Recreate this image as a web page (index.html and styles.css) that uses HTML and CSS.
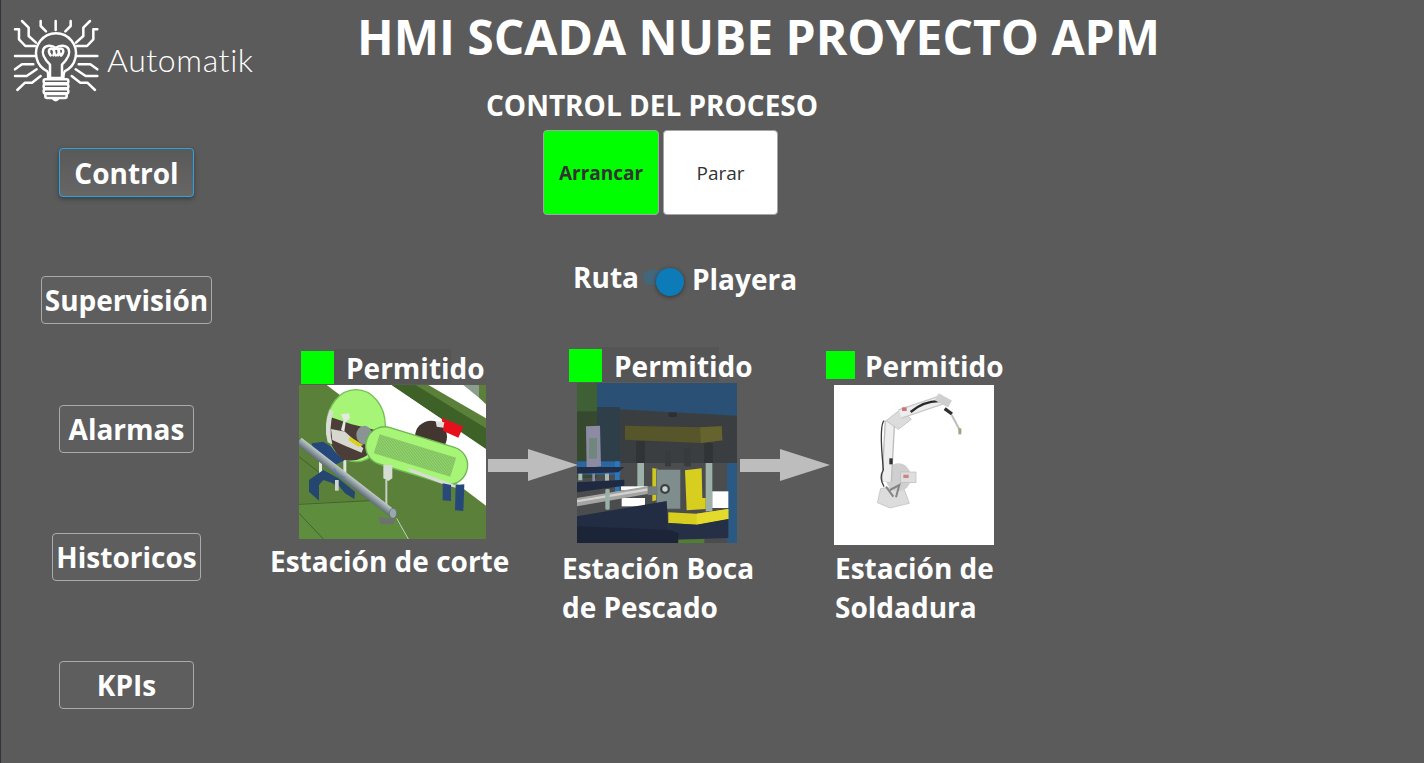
FILE: index.html
```
<!DOCTYPE html>
<html lang="es">
<head>
<meta charset="utf-8">
<title>HMI SCADA NUBE PROYECTO APM</title>
<link rel="stylesheet" href="styles.css">
</head>
<body>
<div class="page">
  <aside class="sidebar">
    <div class="brand">
      <svg class="logo" viewBox="0 0 276 270" fill="none" stroke="#fff" stroke-width="7.5" stroke-linecap="round" stroke-linejoin="round">
        <path d="M112 166A60 60 0 1 1 164 166C160 172 160 178 160 186H114C114 178 116 172 112 166Z"/>
        <path d="M120 184V146C104 130 94 114 100 100C106 86 126 86 137 96C148 86 170 86 176 100C182 114 172 130 156 146V184"/>
        <path d="M122 118C112 106 118 96 126 98C134 100 134 112 130 118M138 118C128 106 132 96 138 98C146 96 148 106 144 118M152 118C146 110 144 98 150 98C160 96 164 106 154 118"/>
        <rect x="101" y="190" width="74" height="12" rx="5"/><rect x="101" y="205" width="74" height="12" rx="5"/><rect x="101" y="220" width="74" height="12" rx="5"/>
        <path d="M106 234H170V242Q170 246 160 246H116Q106 246 106 242ZM128 247Q137 258 146 247"/>
        <path d="M36 15L56 35V60L78 80M15 40H27V70L46 90H76M15 120H76M15 160L36 145H70M15 180H50L80 160M22 222L45 200H66L92 180"/>
        <path d="M92 15V30L108 46M137 15V42M182 15V30L166 46"/>
        <path d="M240 15L220 35V60L198 80M262 40H250V70L231 90H200M262 120H200M262 160L241 145H206M262 180H227L197 160M255 222L232 200H211L185 180"/>
      </svg>
      <span class="brand-name">Automatik</span>
    </div>
    <nav class="nav">
      <button class="nav-btn nav-btn-active">Control</button>
      <button class="nav-btn">Supervisión</button>
      <button class="nav-btn">Alarmas</button>
      <button class="nav-btn">Historicos</button>
      <button class="nav-btn">KPIs</button>
    </nav>
  </aside>
  <main class="main">
    <h1 class="title">HMI SCADA NUBE PROYECTO APM</h1>
    <h2 class="section-title">CONTROL DEL PROCESO</h2>
    <div class="actions">
      <button class="action action-start">Arrancar</button>
      <button class="action action-stop">Parar</button>
    </div>
    <div class="mode">
      <span class="mode-left">Ruta</span>
      <span class="switch"><span class="switch-knob"></span></span>
      <span class="mode-right">Playera</span>
    </div>
    <section class="line">
      <article class="station station-cut">
        <div class="status"><span class="lamp"></span><span class="status-text">Permitido</span></div>
        <svg class="photo photo-cut" viewBox="12 0 561 462">
          <defs>
            <linearGradient id="pipe" x1="0" y1="0" x2="0" y2="1"><stop offset="0" stop-color="#c4cccd"/><stop offset="0.5" stop-color="#8d9a9e"/><stop offset="1" stop-color="#5d6c72"/></linearGradient>
            <pattern id="hatch" width="6" height="6" patternUnits="userSpaceOnUse" patternTransform="rotate(35)"><rect width="6" height="6" fill="#8fd06a"/><path d="M0 0H6" stroke="#72ad55" stroke-width="2.5"/></pattern>
          </defs>
          <rect x="12" width="561" height="462" fill="#5a803a"/>
          <polygon points="95,0 290,0 573,190 573,362" fill="#fff"/>
          <polygon points="290,0 362,0 573,130 573,192" fill="#3e6128"/>
          <polygon points="400,0 525,0 573,45 573,100" fill="#fff"/>
          <polygon points="505,0 552,0 552,38" fill="#8b9d8c"/>
          <polygon points="552,0 573,0 573,58 552,38" fill="#5a803a"/>
          <polygon points="12,355 262,345 342,462 12,462" fill="#5f8d3e"/>
          <path d="M12 215L120 300M12 358L262 345M12 385L85 462" stroke="#34502a" stroke-width="2" fill="none"/>
          <path d="M305 400L340 462" stroke="#c7cfc2" stroke-width="3"/>
          <rect x="72" y="225" width="9" height="55" fill="#dfe4e0"/><rect x="145" y="225" width="9" height="55" fill="#dfe4e0"/>
          <polygon points="50,175 85,170 140,205 150,225 120,240 60,215" fill="#26477a"/>
          <polygon points="42,285 85,255 130,280 180,320 178,342 150,325 130,300 85,285 72,300 72,347 42,320" fill="#24466f"/>
          <ellipse cx="183" cy="122" rx="88" ry="108" fill="#a6f576" stroke="#78bf58" stroke-width="4"/>
          <path d="M106 96L170 118L262 140L240 190Q195 240 140 222Q104 190 96 130Z" fill="#4c3d38"/>
          <polygon points="108,132 150,140 205,190 200,203 150,182 112,165" fill="#d6d8d0"/>
          <path d="M165 155L205 180L190 185L160 165Z" fill="#d8d21c"/>
          <path d="M105 72Q84 120 98 172L112 178Q100 130 115 80Z" fill="#d9ddd5"/>
          <polygon points="138,88 162,85 165,100 152,110 148,140 138,135 146,105" fill="#e6e8e4"/>
          <ellipse cx="208" cy="150" rx="24" ry="28" fill="#8a9494"/>
          <circle cx="408" cy="155" r="48" fill="#43352f"/>
          <polygon points="440,98 505,125 490,158 445,138" fill="#e6101d"/>
          <polygon points="422,108 448,112 445,128 425,125" fill="#dfe0dc"/>
          <g transform="rotate(17 365 212)">
            <rect x="208" y="155" width="314" height="114" rx="56" fill="#a6f576" stroke="#6fb653" stroke-width="4"/>
            <rect x="240" y="183" width="240" height="60" fill="url(#hatch)"/>
          </g>
          <polygon points="340,248 480,300 497,300 478,298 505,315 445,298 345,260" fill="#d8dcd5"/>
          <polygon points="443,295 468,300 468,348 443,346" fill="#28497a"/>
          <polygon points="482,300 508,298 505,378 480,376" fill="#26477a"/>
          <polygon points="265,240 292,240 292,280 280,288 265,280" fill="#d5dcd3"/>
          <rect x="271" y="285" width="6" height="85" fill="#c8cfc6"/>
          <g transform="translate(12 168) rotate(37.8)"><rect width="356" height="25" y="-12.5" fill="url(#pipe)"/></g>
          <ellipse cx="294" cy="385" rx="11" ry="15" fill="#9aa7ac" stroke="#5a676a" stroke-width="2"/>
          <path d="M118 250Q125 270 150 278" stroke="#4b7ec8" stroke-width="3" fill="none"/>
          <polygon points="248,396 300,402 296,418 258,418" fill="#6e726f"/>
          <rect x="120" y="285" width="11" height="32" fill="#d0d5cf"/>
        </svg>
        <p class="station-name">Estación de corte</p>
      </article>
      <svg class="arrow" viewBox="0 0 90 32"><polygon points="0,10 40,10 40,0 90,16 40,32 40,23 0,23"/></svg>
      <article class="station station-fish">
        <div class="status"><span class="lamp"></span><span class="status-text">Permitido</span></div>
        <svg class="photo photo-fish" viewBox="6 0 480 480">
          <rect x="6" width="480" height="480" fill="#2a5076"/>
          <polygon points="6,72 486,98 486,240 6,240" fill="#3b3e40"/>
          <rect x="6" y="240" width="450" height="240" fill="#4b4c4d"/>
          <rect x="456" y="240" width="30" height="240" fill="#2a5a84"/>
          <rect x="65" y="72" width="70" height="180" fill="#2f3f4a"/>
          <rect x="6" y="0" width="60" height="90" fill="#3f5f34"/>
          <rect x="6" y="85" width="60" height="200" fill="#36492f"/>
          <rect x="6" y="235" width="130" height="40" fill="#2a66a0"/>
          <rect x="120" y="235" width="14" height="110" fill="#2a78bc"/>
          <rect x="280" y="88" width="26" height="14" rx="5" fill="#2c3033"/>
          <polygon points="150,128 375,133 440,130 442,172 378,180 150,170" fill="#57552a"/>
          <polygon points="375,133 440,130 442,172 378,180" fill="#66642e"/>
          <rect x="183" y="175" width="27" height="65" fill="#303436"/><rect x="388" y="180" width="26" height="60" fill="#303436"/>
          <rect x="187" y="240" width="20" height="75" fill="#9db1a9"/><rect x="392" y="240" width="20" height="145" fill="#9db1a9"/>
          <rect x="270" y="205" width="18" height="45" fill="#383b3c"/><rect x="328" y="195" width="20" height="55" fill="#383b3c"/>
          <rect x="412" y="325" width="48" height="50" fill="#fff"/><rect x="138" y="310" width="80" height="12" fill="#fff"/><rect x="140" y="345" width="70" height="25" fill="#fff"/>
          <polygon points="232,255 250,258 250,350 232,355" fill="#cfc61e"/>
          <polygon points="330,262 380,256 382,345 392,345 392,378 335,382" fill="#d8ce20"/>
          <rect x="244" y="260" width="72" height="118" fill="#7f8d8c" stroke="#565f60" stroke-width="2"/>
          <circle cx="270" cy="318" r="15" fill="#3c4243"/><circle cx="270" cy="318" r="8" fill="#c9d2ce"/>
          <polygon points="280,388 365,392 460,378 460,408 365,425 280,420" fill="#d8ce20"/>
          <polygon points="365,392 460,378 460,408 365,425" fill="#e3da2c"/>
          <polygon points="280,420 365,425 460,408 460,465 280,470" fill="#252f45"/>
          <polygon points="33,130 75,128 78,250 35,255" fill="#8d8aa4"/>
          <rect x="42" y="165" width="24" height="62" fill="#71867c"/>
          <polygon points="6,252 148,252 130,268 6,272" fill="#222d48"/>
          <rect x="10" y="272" width="12" height="20" fill="#a8bab0"/><rect x="90" y="272" width="12" height="26" fill="#a8bab0"/><rect x="52" y="272" width="8" height="24" fill="#8d8aa4"/>
          <polygon points="6,298 148,290 148,308 6,328" fill="#1f2a40"/>
          <polygon points="6,345 218,310 222,332 6,370" fill="#a4a5a2"/>
          <polygon points="6,352 218,316 219,323 6,358" fill="#d2d2cf"/>
          <rect x="218" y="310" width="30" height="26" fill="#747c7c"/>
          <rect x="91" y="318" width="13" height="62" rx="4" fill="#9ab0a5"/>
          <polygon points="6,400 275,354 280,440 6,480" fill="#222c43"/>
          <polygon points="6,480 6,430 280,440 310,450 310,480" fill="#1c2538"/>
          <polygon points="310,470 388,468 388,480 310,480" fill="#4f7f30"/>
        </svg>
        <p class="station-name">Estación Boca de Pescado</p>
      </article>
      <svg class="arrow" viewBox="0 0 90 32"><polygon points="0,10 40,10 40,0 90,16 40,32 40,23 0,23"/></svg>
      <article class="station station-weld">
        <div class="status"><span class="lamp"></span><span class="status-text">Permitido</span></div>
        <svg class="photo photo-weld" viewBox="-108 -15 480 480">
          <rect x="-108" y="-15" width="480" height="480" fill="#fff"/>
          <polygon points="32,295 100,290 118,340 60,354 22,338" fill="#dcdcdc" stroke="#bbb" stroke-width="2"/>
          <ellipse cx="85" cy="262" rx="38" ry="42" fill="#cfcfcf"/>
          <rect x="92" y="246" width="46" height="32" fill="#dedede" stroke="#bbb" stroke-width="2"/>
          <rect x="100" y="254" width="16" height="10" fill="#cc8585"/>
          <path d="M60 92L50 275" stroke="#bdbdbd" stroke-width="32" fill="none"/>
          <path d="M60 92L50 275" stroke="#eeeeee" stroke-width="24" fill="none"/>
          <path d="M42 92Q30 105 36 190L40 240Q26 262 42 290" stroke="#3c3c3c" stroke-width="4" fill="none"/>
          <rect x="58" y="205" width="10" height="18" fill="#333"/>
          <path d="M60 300L88 285L78 322M48 290L70 320" stroke="#858585" stroke-width="6" fill="none"/>
          <path d="M48 92L92 58L124 88L85 118Z" fill="#dcdcdc" stroke="#b5b5b5" stroke-width="2"/>
          <path d="M90 72L220 28" stroke="#c9c9c9" stroke-width="30" fill="none"/>
          <path d="M90 72L220 28" stroke="#ededed" stroke-width="22" fill="none"/>
          <path d="M122 66Q165 30 215 34" stroke="#2a2a2a" stroke-width="7" fill="none"/>
          <rect x="96" y="52" width="14" height="11" fill="#c97575"/>
          <path d="M200 20L240 42" stroke="#cfcfcf" stroke-width="24"/>
          <path d="M224 56L246 72" stroke="#2e2e2e" stroke-width="10"/>
          <path d="M245 75L272 125" stroke="#bdbdbd" stroke-width="6"/>
          <rect x="265" y="115" width="9" height="18" fill="#a8a080"/>
        </svg>
        <p class="station-name">Estación de Soldadura</p>
      </article>
    </section>
  </main>
</div>
</body>
</html>
```
FILE: styles.css
```
* { box-sizing: border-box; }
html, body { margin: 0; height: 100%; }
body {
  background: #5b5b5b;
  color: #fff;
  font-family: "Open Sans", "Liberation Sans", sans-serif;
  overflow: hidden;
}
button { font-family: inherit; cursor: pointer; }

.page {
  display: flex;
  height: 763px;
  border-left: 1px solid #33343c;
}
.sidebar { width: 251px; flex: none; }
.brand {
  display: flex;
  align-items: center;
  height: 106px;
  padding: 16px 0 0 9px;
}
.logo { width: 92px; height: 90px; flex: none; }
.brand-name {
  margin: 0 0 0 5px;
  font-family: "Lato", sans-serif;
  font-weight: 300;
  font-size: 32px;
  letter-spacing: 0.6px;
  position: relative;
  top: -2px;
}
.nav {
  display: flex;
  flex-direction: column;
  align-items: center;
  gap: 80.25px;
  margin-top: 42px;
}
.nav-btn {
  height: 48px;
  min-width: 135px;
  padding: 0 3px;
  border: 1px solid #aaa;
  border-radius: 4px;
  background: #5e5e5e;
  color: #fff;
  font-size: 28px;
  font-weight: 700;
  line-height: 46px;
}
.nav-btn-active {
  height: 49px;
  margin-bottom: -1px;
  border-color: #29a3e6;
  background: linear-gradient(#595959, #666);
  box-shadow: 0 2px 5px rgba(0, 0, 0, 0.35);
}

.main { flex: 1; min-width: 0; }
.title {
  margin: 0 0 0 105px;
  height: 74px;
  font-size: 48px;
  font-weight: 700;
  line-height: 74px;
  white-space: nowrap;
}
.section-title {
  margin: 13px 0 0 234px;
  font-size: 28px;
  font-weight: 700;
  line-height: 36px;
  white-space: nowrap;
}
.actions {
  display: flex;
  gap: 4px;
  margin: 7px 0 0 291px;
}
.action {
  width: 116px;
  height: 85px;
  padding: 0;
  border: 1px solid #a5a5a5;
  border-radius: 4px;
  color: #333;
  font-size: 19px;
}
.action-start { background: #00ff00; font-weight: 700; }
.action-stop { width: 115px; background: #fff; font-weight: 400; }

.mode {
  display: flex;
  align-items: center;
  height: 40px;
  margin: 43px 0 0 321px;
  font-size: 28px;
  font-weight: 700;
}
.mode-left { margin-top: -2px; }
.switch {
  position: relative;
  width: 30px;
  height: 15px;
  margin: -1px 0 0 4px;
  border-radius: 8px;
  background: #44667a;
}
.switch-knob {
  position: absolute;
  top: -2px;
  right: -11px;
  width: 28px;
  height: 28px;
  border-radius: 50%;
  background: #0c7bb8;
  box-shadow: 0 1px 4px rgba(0, 0, 0, 0.45);
}
.mode-right { margin: 2px 0 0 19px; }

.line {
  display: flex;
  align-items: flex-start;
  margin: 49px 0 0 18px;
}
.station { flex: none; }
.station-cut { width: 218px; }
.station-fish { width: 178px; }
.station-weld { width: 190px; }
.arrow {
  flex: none;
  width: 90px;
  height: 32px;
  margin-top: 102px;
  fill: #bdbdbd;
}
.station-cut + .arrow { margin-right: -16px; }
.station-fish + .arrow { margin-right: -4px; }

.status { display: flex; height: 35px; }
.lamp { flex: none; width: 33px; height: 33px; margin-top: 2px; background: #00ff00; }
.status-text {
  width: 117px;
  height: 35px;
  padding-left: 12px;
  background: #555;
  font-size: 28px;
  font-weight: 700;
  line-height: 38px;
  white-space: nowrap;
}
.photo { display: block; }
.photo-cut { width: 187px; height: 154px; margin: 1px 0 0 29px; }
.photo-fish { width: 160px; height: 160px; margin: 1px 0 0 15px; }
.photo-weld { width: 160px; height: 160px; margin: 3px 0 0 8px; }

.station-cut .status { margin: 2px 0 0 31px; }
.station-fish .status { margin-left: 7px; }
.station-weld .status-text { background: none; padding-left: 10px; }
.station-weld .lamp { width: 29px; height: 28px; margin-top: 4px; }

.station-name {
  margin: 3px 0 0;
  font-size: 28px;
  font-weight: 700;
  line-height: 39px;
}
.station-cut .station-name { white-space: nowrap; }
.station-fish .station-name { width: 210px; margin-top: 6px; }
.station-weld .station-name { width: 175px; margin: 4px 0 0 9px; }
```
